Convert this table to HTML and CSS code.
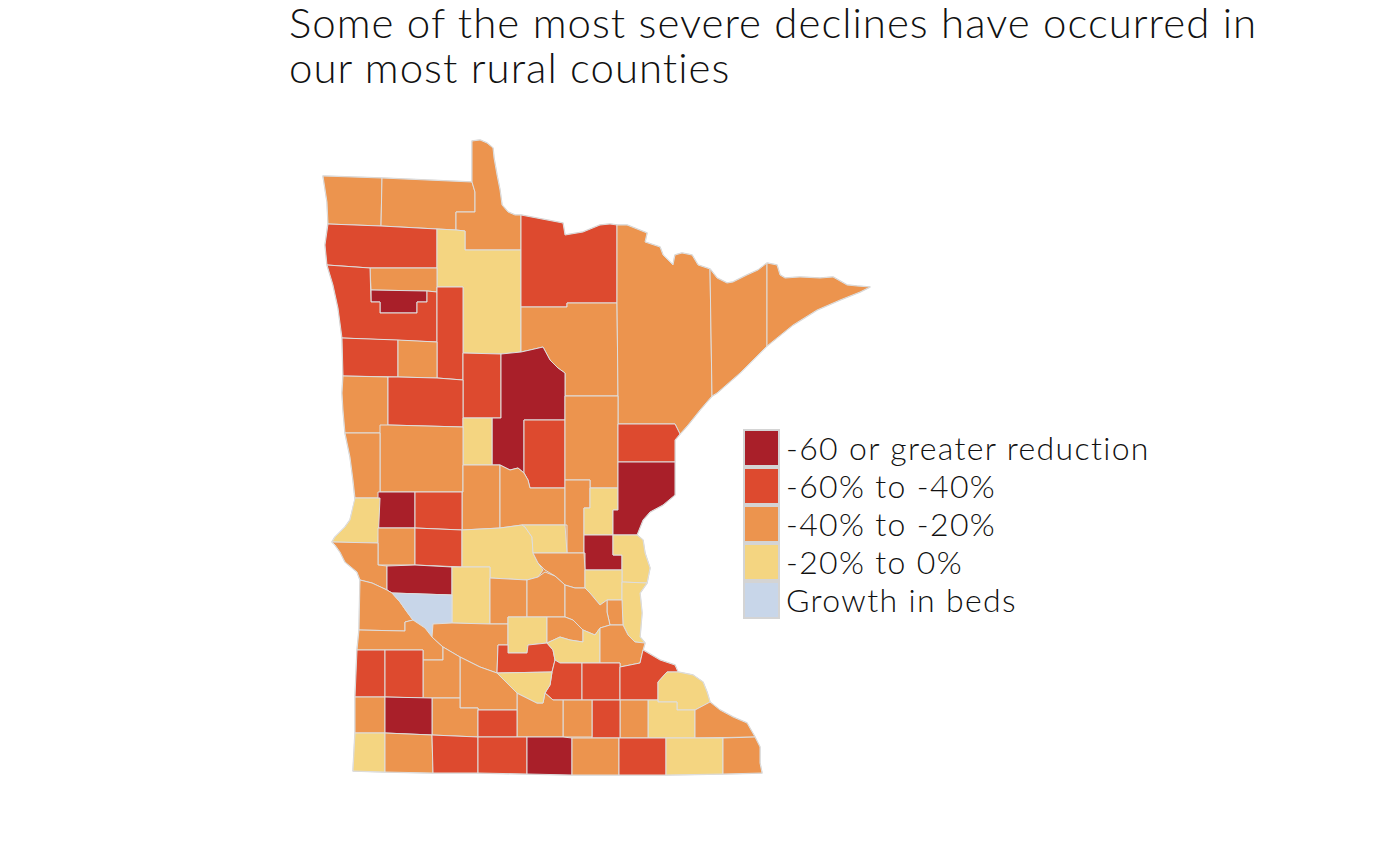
FILE: index.html
```html
<!DOCTYPE html>
<html lang="en">
<head>
<meta charset="utf-8">
<title>Minnesota bed declines</title>
<link rel="stylesheet" href="styles.css">
</head>
<body>
<h1 class="title"><span class="line">Some of the most severe declines have occurred in</span><span class="line">our most rural counties</span></h1>
<div class="chart">
<svg class="map" width="560" height="650" viewBox="320 135 560 650" xmlns="http://www.w3.org/2000/svg">
<polygon class="state" points="323,176 382,178 472,182 472,141 480,140 487,143 493,148 494,158 497,175 500,190 502,205 508,212 515,215 521,215 563,223 565,235 583,232 600,225 610,224 617,225 627,225 647,233 645,242 660,247 663,255 673,265 675,255 682,253 692,255 698,265 710,269 717,278 727,283 733,282 747,275 758,270 767,263 777,265 780,275 785,278 800,277 820,278 833,277 847,285 857,286 870,287 860,292 840,300 817,310 793,325 767,346 753,360 740,373 717,393 712,396 700,410 688,425 680,434 675,440 675,495 663,505 650,512 643,520 637,535 643,540 645,553 650,568 647,583 640,593 642,613 640,637 645,643 643,650 660,660 675,665 678,672 693,675 703,682 707,692 710,702 720,710 733,717 747,723 755,737 760,747 760,763 762,773 723,774 666,775 619,775 572,775 527,774 478,773 433,773 385,772 353,771 355,733 355,697 357,650 359,630 360,580 357,572 345,562 340,552 335,545 332,542 335,537 345,527 350,520 355,500 353,480 350,457 345,433 343,410 342,393 343,375 342,338 338,308 333,285 327,265 325,245 328,223 327,202"/>
<g class="counties">
<polygon class="o" points="323,176 382,178 381,226 328,224 327,202"/>
<polygon class="o" points="382,178 472,182 475,192 475,212 456,212 456,230 381,226"/>
<polygon class="o" points="472,182 472,141 480,140 487,143 493,148 494,158 497,175 500,190 502,205 508,212 515,215 521,215 521,250 465,250 465,231 456,230 456,212 475,212 475,192"/>
<polygon class="r" points="328,224 381,226 437,229 437,268 370,268 327,265 325,245"/>
<polygon class="y" points="437,229 456,230 465,231 465,250 521,250 521,352 501,354 463,353 463,287 437,287"/>
<polygon class="o" points="370,268 437,268 437,292 427,291 371,290"/>
<polygon class="d" points="371,290 427,291 427,302 417,302 417,313 380,313 380,302 371,302"/>
<polygon class="r" points="327,265 370,268 371,302 380,302 380,313 417,313 417,302 427,302 427,291 437,292 437,342 342,338 338,308 333,285"/>
<polygon class="r" points="437,287 463,287 463,380 437,378 437,342"/>
<polygon class="r" points="521,215 563,223 565,235 583,232 600,225 610,224 617,225 617,303 567,303 567,307 521,307"/>
<polygon class="o" points="521,307 567,307 567,303 617,303 618,396 565,396 565,373 558,368 550,360 543,347 530,350 521,352"/>
<polygon class="o" points="617,225 627,225 647,233 645,242 660,247 663,255 673,265 675,255 682,253 692,255 698,265 710,269 712,396 700,410 688,425 680,434 675,424 618,424 618,396 617,303"/>
<polygon class="o" points="710,269 717,278 727,283 733,282 747,275 758,270 767,263 767,346 753,360 740,373 717,393 712,396"/>
<polygon class="o" points="767,263 777,265 780,275 785,278 800,277 820,278 833,277 847,285 857,286 870,287 860,292 840,300 817,310 793,325 767,346"/>
<polygon class="r" points="342,338 398,340 398,377 343,376"/>
<polygon class="o" points="398,340 437,342 437,378 398,377"/>
<polygon class="r" points="463,353 501,354 501,418 463,418"/>
<polygon class="d" points="501,354 521,352 530,350 543,347 550,360 558,368 565,373 565,420 524,420 524,473 518,468 510,470 500,465 492,465 492,418 501,418"/>
<polygon class="r" points="524,420 565,420 565,488 530,488 528,480 524,473"/>
<polygon class="o" points="565,396 618,396 618,488 590,488 590,480 565,480 565,420"/>
<polygon class="o" points="343,376 388,377 388,433 345,433 343,410 342,393"/>
<polygon class="r" points="388,377 398,377 437,378 463,380 463,427 388,425"/>
<polygon class="y" points="463,418 492,418 492,465 463,465"/>
<polygon class="o" points="380,425 388,425 463,427 463,492 380,492 380,433"/>
<polygon class="o" points="345,433 380,433 380,498 355,498 353,480 350,457"/>
<polygon class="o" points="463,465 500,465 500,528 462,530 462,492 463,492"/>
<polygon class="o" points="500,465 510,470 518,468 524,473 528,480 530,488 565,488 565,525 522,525 500,528"/>
<polygon class="o" points="565,480 590,480 590,508 584,508 584,553 567,553 567,525 565,525 565,488"/>
<polygon class="y" points="590,488 618,488 618,510 613,510 613,535 584,535 584,508 590,508"/>
<polygon class="r" points="618,424 675,424 680,434 675,440 675,462 618,462"/>
<polygon class="d" points="618,462 675,462 675,495 663,505 650,512 643,520 637,535 613,535 613,510 618,510"/>
<polygon class="d" points="584,535 613,535 613,555 622,555 622,570 585,570 585,553 584,553"/>
<polygon class="y" points="613,535 637,535 643,540 645,553 650,568 647,583 622,582 622,555 613,555"/>
<polygon class="d" points="378,492 415,492 415,528 378,528"/>
<polygon class="r" points="415,492 462,492 462,530 415,528"/>
<polygon class="y" points="355,498 380,498 378,543 332,542 335,537 345,527 350,520"/>
<polygon class="o" points="378,528 415,528 415,565 378,565"/>
<polygon class="r" points="415,528 462,530 462,567 415,565"/>
<polygon class="y" points="462,530 500,528 522,525 525,527 532,537 533,553 538,563 543,570 538,577 527,580 490,578 490,567 462,567"/>
<polygon class="y" points="522,525 565,525 567,553 533,553 532,537 525,527"/>
<polygon class="o" points="533,553 584,553 585,570 585,588 575,588 565,585 555,576 545,570 538,563"/>
<polygon class="o" points="332,542 378,543 378,565 387,566 387,590 372,583 360,580 357,572 345,562 340,552 335,545"/>
<polygon class="d" points="387,566 415,565 452,567 452,595 392,593 387,590"/>
<polygon class="y" points="452,567 490,567 490,624 452,623"/>
<polygon class="o" points="490,578 527,580 527,617 508,617 508,624 490,624"/>
<polygon class="o" points="527,580 538,577 545,572 555,576 565,585 565,617 547,617 527,617"/>
<polygon class="o" points="360,580 372,583 387,590 392,593 400,602 407,612 413,620 405,622 405,631 359,630"/>
<polygon class="b" points="392,593 452,595 452,623 433,624 432,637 425,628 413,620 407,612 400,602"/>
<polygon class="o" points="359,630 405,631 405,622 413,620 425,628 432,637 443,647 443,660 423,660 423,650 357,650"/>
<polygon class="o" points="433,624 452,623 490,624 508,624 508,645 498,645 497,673 480,667 460,657 443,647 432,637"/>
<polygon class="y" points="508,617 547,617 547,643 528,645 527,653 508,653 508,645"/>
<polygon class="r" points="498,645 508,645 508,653 527,653 528,645 547,643 553,650 555,660 552,672 497,673"/>
<polygon class="y" points="585,570 622,570 622,600 607,600 600,605 590,593 585,588"/>
<polygon class="y" points="622,582 647,583 640,593 642,613 640,637 645,643 635,642 628,635 623,625 622,600"/>
<polygon class="o" points="607,600 622,600 623,625 610,625 607,612"/>
<polygon class="o" points="565,585 575,588 585,588 590,593 600,605 607,600 607,612 610,625 600,628 595,635 583,630 573,620 565,617"/>
<polygon class="o" points="547,617 565,617 573,620 583,630 583,642 570,640 560,637 547,643"/>
<polygon class="y" points="547,643 560,637 570,640 583,642 583,630 595,635 600,628 600,663 582,663 560,663 555,660 553,650"/>
<polygon class="o" points="600,628 610,625 623,625 628,635 635,642 645,643 643,650 640,663 620,667 620,663 600,663"/>
<polygon class="r" points="552,672 555,660 560,663 582,663 582,700 553,700 545,693 550,685"/>
<polygon class="r" points="582,663 620,663 620,700 582,700"/>
<polygon class="r" points="620,667 640,663 643,650 660,660 675,665 678,672 667,672 658,682 658,700 620,700"/>
<polygon class="y" points="667,672 678,672 693,675 703,682 707,692 710,702 695,710 677,710 677,702 658,702 658,682"/>
<polygon class="y" points="648,700 658,700 658,702 677,702 677,710 695,710 695,738 648,738"/>
<polygon class="o" points="695,710 710,702 720,710 733,717 747,723 755,737 695,738"/>
<polygon class="o" points="620,700 648,700 648,738 620,738"/>
<polygon class="r" points="592,700 620,700 620,738 592,738"/>
<polygon class="o" points="563,700 592,700 592,737 563,737"/>
<polygon class="o" points="517,693 537,703 543,703 545,693 553,700 563,700 563,737 517,737"/>
<polygon class="y" points="497,673 552,672 550,685 545,693 543,703 537,703 517,693"/>
<polygon class="o" points="460,657 480,667 497,673 517,693 517,710 478,710 478,708 460,708"/>
<polygon class="o" points="423,660 443,660 443,647 460,657 460,698 432,698 423,698"/>
<polygon class="o" points="432,698 460,698 460,708 478,708 478,737 432,735"/>
<polygon class="r" points="478,710 517,710 517,737 478,737"/>
<polygon class="r" points="357,650 385,650 385,697 355,697"/>
<polygon class="r" points="385,650 423,650 423,698 385,697"/>
<polygon class="o" points="355,697 385,697 385,733 355,733"/>
<polygon class="d" points="385,697 432,698 432,735 385,733"/>
<polygon class="y" points="355,733 385,733 385,772 353,771"/>
<polygon class="o" points="385,733 432,735 433,773 385,772"/>
<polygon class="r" points="432,735 478,737 478,773 433,773"/>
<polygon class="r" points="478,737 527,737 527,774 478,773"/>
<polygon class="d" points="527,737 563,737 572,738 572,775 527,774"/>
<polygon class="o" points="572,738 619,738 619,775 572,775"/>
<polygon class="r" points="619,738 666,738 666,775 619,775"/>
<polygon class="y" points="666,738 723,738 723,774 666,775"/>
<polygon class="o" points="723,738 755,737 760,747 760,763 762,773 723,774"/>
</g>
</svg>
<ul class="legend">
<li class="item"><span class="swatch d"></span>-60 or greater reduction</li>
<li class="item"><span class="swatch r"></span>-60% to -40%</li>
<li class="item"><span class="swatch o"></span>-40% to -20%</li>
<li class="item"><span class="swatch y"></span>-20% to 0%</li>
<li class="item"><span class="swatch b"></span>Growth in beds</li>
</ul>
</div>
</body>
</html>
```
FILE: styles.css
```css
html, body {
  margin: 0;
  padding: 0;
  background: #ffffff;
}
body {
  font-family: "Lato", "Open Sans", sans-serif;
  color: #111111;
  width: 1386px;
  height: 842px;
  overflow: hidden;
}
.title {
  margin: 0;
  padding-left: 289px;
  font-size: 42px;
  font-weight: 300;
  letter-spacing: 1px;
  height: 90px;
  display: flex;
  flex-direction: column;
}
.line {
  display: block;
  height: 45px;
  line-height: 45px;
  white-space: nowrap;
}
.chart {
  display: grid;
  grid-template-columns: 423px auto;
  grid-template-rows: 294px auto 1fr;
  margin: 45px 0 0 320px;
}
.map {
  grid-column: 1 / 3;
  grid-row: 1 / 4;
  display: block;
}
.state {
  fill: #ec944e;
  stroke: #d6d6d6;
  stroke-width: 1.5;
  stroke-linejoin: round;
}
.counties polygon {
  stroke: #dedede;
  stroke-width: 1;
  stroke-linejoin: round;
}
.counties .d { fill: #a91f29; }
.counties .r { fill: #dd4a2f; }
.counties .o { fill: #ec944e; }
.counties .y { fill: #f4d581; }
.counties .b { fill: #c8d6e9; }
.legend {
  grid-column: 2;
  grid-row: 2;
  list-style: none;
  margin: 0;
  padding: 0;
  display: flex;
  flex-direction: column;
  z-index: 1;
}
.item {
  display: flex;
  align-items: center;
  height: 38px;
  font-size: 32px;
  font-weight: 300;
  letter-spacing: 1.35px;
  line-height: 38px;
  white-space: nowrap;
}
.swatch {
  box-sizing: border-box;
  width: 37px;
  height: 38px;
  border: 2px solid #d4d4d4;
  margin-right: 6px;
  flex: none;
}
.swatch.d { background: #a91f29; }
.swatch.r { background: #dd4a2f; }
.swatch.o { background: #ec944e; }
.swatch.y { background: #f4d581; }
.swatch.b { background: #c8d6e9; }
```
